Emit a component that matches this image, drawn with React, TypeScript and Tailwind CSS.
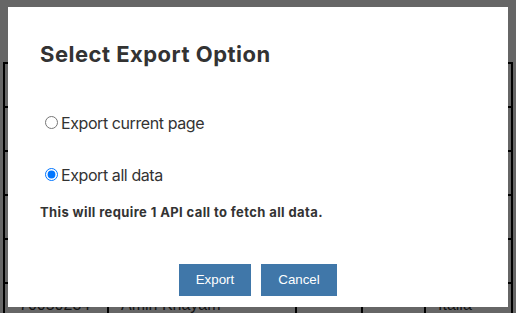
import { useState } from 'react'

const rows = [0, 1, 2, 3, 4, 5]

export default function App() {
  const [mode, setMode] = useState<'page' | 'all'>('all')

  return (
    <div className="relative h-[313px] w-[516px] overflow-hidden bg-white font-['Inter',sans-serif] text-[#333]">
      {/* table behind the dialog */}
      <div className="pl-[3px] pt-[62px]">
        <table className="w-[510px] border-collapse font-['Liberation_Sans',Arial,sans-serif] text-[16px]">
          <tbody>
            {rows.map((r) => (
              <tr key={r} className="h-[44px]">
                <td className="w-[104px] border-2 border-black pl-[14px]">{r === 5 ? '70050234' : ''}</td>
                <td className="w-[188px] border-2 border-black px-3">{r === 5 ? 'Amin Khayam' : ''}</td>
                <td className="w-[66px] border-2 border-black px-3"></td>
                <td className="w-[63px] border-2 border-black px-3"></td>
                <td className="border-2 border-black px-3">{r === 5 ? 'Italia' : ''}</td>
              </tr>
            ))}
          </tbody>
        </table>
      </div>

      <div className="fixed inset-0 flex items-center justify-center bg-black/60">
        <div className="flex h-[300px] w-[500px] flex-col bg-white px-8 pt-[33px]">
          <h2 className="text-[22px] font-bold leading-[28px] tracking-[0.022em]">Select Export Option</h2>

          <label className="mt-[43px] flex items-center text-[16px] leading-[24px] tracking-[-0.026em]">
            <input
              type="radio"
              name="export"
              checked={mode === 'page'}
              onChange={() => setMode('page')}
              className="mx-[3px] ml-[5px]"
            />
            Export current page
          </label>

          <label className="mt-[28px] flex items-center text-[16px] leading-[24px] tracking-[-0.026em]">
            <input
              type="radio"
              name="export"
              checked={mode === 'all'}
              onChange={() => setMode('all')}
              className="mx-[3px] ml-[5px]"
            />
            Export all data
          </label>

          <p className="mt-[15px] text-[13px] font-bold leading-[20px] tracking-[0.03em]">
            This will require 1 API call to fetch all data.
          </p>

          <div className="mt-[42px] flex justify-center gap-[10px] font-['Liberation_Sans',Arial,sans-serif] text-[13.33px] text-white">
            <button className="h-8 w-[72px] bg-[#4077a9]">Export</button>
            <button className="h-8 w-[76px] bg-[#4077a9]">Cancel</button>
          </div>
        </div>
      </div>
    </div>
  )
}
